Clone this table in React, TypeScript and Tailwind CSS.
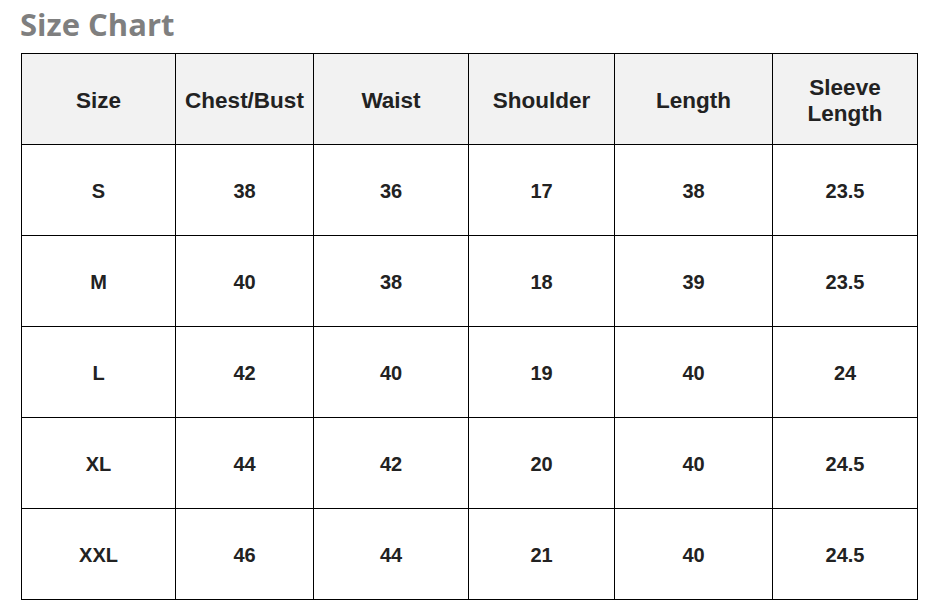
const headers = ["Size", "Chest/Bust", "Waist", "Shoulder", "Length", "Sleeve Length"];

const rows = [
  ["S", "38", "36", "17", "38", "23.5"],
  ["M", "40", "38", "18", "39", "23.5"],
  ["L", "42", "40", "19", "40", "24"],
  ["XL", "44", "42", "20", "40", "24.5"],
  ["XXL", "46", "44", "21", "40", "24.5"],
];

const widths = [154, 138, 155, 146, 158, 145];

export default function App() {
  return (
    <div className="min-h-screen bg-white pl-[21px] pt-[4px]">
      <h1 className="-ml-px font-['Open_Sans',sans-serif] text-[31px] font-bold leading-[40px] text-[#7f7f7f]">
        Size Chart
      </h1>
      <table className="mt-[9px] w-[897px] table-fixed border-collapse font-['Liberation_Sans',Arial,sans-serif] text-[#222]">
        <colgroup>
          {widths.map((w, i) => (
            <col key={i} style={{ width: w }} />
          ))}
        </colgroup>
        <thead>
          <tr className="h-[91px] bg-[#f2f2f2]">
            {headers.map((h) => (
              <th
                key={h}
                className="border border-black px-2 pt-[3px] text-center align-middle text-[22.5px] font-bold leading-[26px]"
              >
                {h === "Sleeve Length" ? (
                  <>
                    Sleeve
                    <br />
                    Length
                  </>
                ) : (
                  h
                )}
              </th>
            ))}
          </tr>
        </thead>
        <tbody>
          {rows.map((row) => (
            <tr key={row[0]} className="h-[91px]">
              {row.map((cell, i) => (
                <td
                  key={i}
                  className="border border-black pt-[2px] text-center align-middle text-[20px] font-bold"
                >
                  {cell}
                </td>
              ))}
            </tr>
          ))}
        </tbody>
      </table>
    </div>
  );
}
